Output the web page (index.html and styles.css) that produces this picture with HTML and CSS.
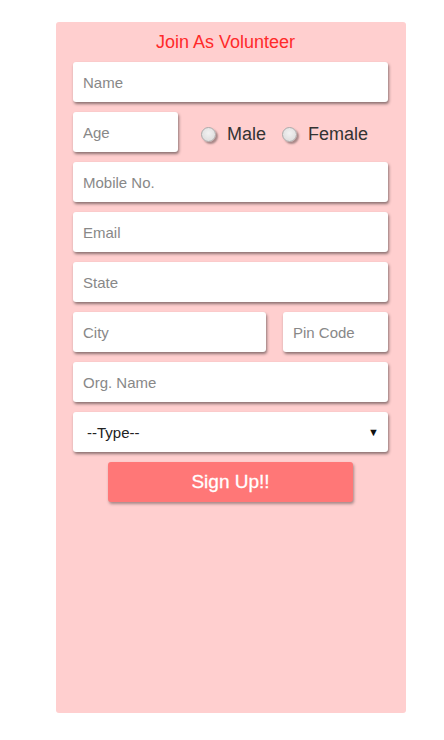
FILE: index.html
```html
<!DOCTYPE html>
<html>
<head>
<meta charset="utf-8">
<link rel="stylesheet" href="styles.css">
</head>
<body>
<div class="card">
  <h2 class="title">Join As Volunteer</h2>
  <form class="form">
    <input class="field" type="text" placeholder="Name">
    <div class="row">
      <input class="field small" type="text" placeholder="Age">
      <div class="gender">
        <label class="opt"><input class="radio" type="radio" name="g"> Male</label>
        <label class="opt"><input class="radio" type="radio" name="g"> Female</label>
      </div>
    </div>
    <input class="field" type="text" placeholder="Mobile No.">
    <input class="field" type="text" placeholder="Email">
    <input class="field" type="text" placeholder="State">
    <div class="row between">
      <input class="field city" type="text" placeholder="City">
      <input class="field small" type="text" placeholder="Pin Code">
    </div>
    <input class="field" type="text" placeholder="Org. Name">
    <div class="field select"><span>--Type--</span><span class="caret">▼</span></div>
    <button class="btn" type="button">Sign Up!!</button>
  </form>
</div>
</body>
</html>
```
FILE: styles.css
```css
html, body { margin: 0; padding: 0; background: #fff; }
body { font-family: "Liberation Sans", Arial, sans-serif; }
.card {
  width: 350px;
  height: 691px;
  margin: 22px 0 0 56px;
  background: #ffcfcf;
  border-radius: 3px;
  box-sizing: border-box;
  padding: 0 18px 0 17px;
}
.title {
  margin: 0;
  padding: 10px 10px 0 0;
  height: 40px;
  box-sizing: border-box;
  text-align: center;
  font-weight: normal;
  font-size: 18px;
  line-height: 21px;
  color: #ff2a2a;
}
.form { display: flex; flex-direction: column; gap: 10px; }
.field {
  box-sizing: border-box;
  width: 315px;
  height: 40px;
  border: none;
  border-radius: 3px;
  background: #fff;
  box-shadow: 1px 2px 3px rgba(0,0,0,0.45);
  padding: 0 10px;
  font-family: "Liberation Sans", Arial, sans-serif;
  font-size: 15px;
  color: #333;
  outline: none;
}
.field::placeholder { color: #888; }
.row { display: flex; align-items: center; }
.between { justify-content: space-between; }
.small { width: 105px; }
.city { width: 193px; }
.gender { display: flex; align-items: center; margin-left: 23px; padding-top: 4px; gap: 16px; }
.opt { display: flex; align-items: center; font-size: 18px; color: #333; }
.radio {
  -webkit-appearance: none;
  appearance: none;
  width: 15px;
  height: 15px;
  margin: 0 11px 0 0;
  border-radius: 50%;
  border: 1px solid #aaa;
  background: radial-gradient(circle at 50% 40%, #f2f2f2, #d8d8d8);
  box-shadow: 2px 2px 2px rgba(0,0,0,0.35);
  box-sizing: border-box;
}
.select {
  display: flex;
  align-items: center;
  justify-content: space-between;
  padding: 0 9px 0 14px;
  font-size: 15px;
  color: #222;
}
.caret { font-size: 11px; color: #111; }
.btn {
  align-self: flex-start;
  margin-left: 35px;
  width: 245px;
  height: 40px;
  border: none;
  border-radius: 3px;
  background: #ff7777;
  color: #fff;
  font-family: "Liberation Sans", Arial, sans-serif;
  font-size: 19px;
  font-weight: normal;
  -webkit-text-stroke: 0.3px #fff;
  box-shadow: 1px 2px 3px rgba(0,0,0,0.35);
}
```
